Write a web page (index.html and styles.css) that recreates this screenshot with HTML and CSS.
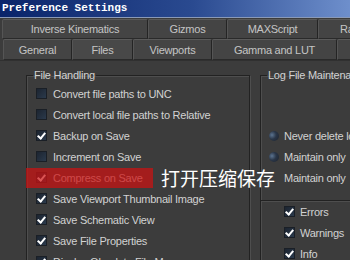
FILE: index.html
```
<!DOCTYPE html>
<html>
<head>
<meta charset="utf-8">
<link rel="stylesheet" href="styles.css">
</head>
<body>
<div class="window">
  <div class="titlebar">Preference Settings</div>
  <div class="tabs row1">
    <div class="tab w-ik">Inverse Kinematics</div>
    <div class="tab w-gz">Gizmos</div>
    <div class="tab w-ms">MAXScript</div>
    <div class="tab w-ra">Radiosity</div>
  </div>
  <div class="tabs row2">
    <div class="tab w-ge">General</div>
    <div class="tab w-fi active">Files</div>
    <div class="tab w-vp">Viewports</div>
    <div class="tab w-gl">Gamma and LUT</div>
    <div class="tab w-rn"></div>
  </div>
  <div class="content">
    <fieldset class="group files">
      <legend>File Handling</legend>
      <ul class="opts">
        <li><span class="cb"></span>Convert file paths to UNC</li>
        <li><span class="cb"></span>Convert local file paths to Relative</li>
        <li><span class="cb on"></span>Backup on Save</li>
        <li><span class="cb"></span>Increment on Save</li>
        <li><span class="cb on"></span>Compress on Save</li>
        <li><span class="cb on"></span>Save Viewport Thumbnail Image</li>
        <li><span class="cb on"></span>Save Schematic View</li>
        <li><span class="cb on"></span>Save File Properties</li>
        <li><span class="cb on"></span>Display Obsolete File Message</li>
      </ul>
    </fieldset>
    <fieldset class="group log">
      <legend>Log File Maintenance</legend>
      <div class="logtop">
        <ul class="opts radios">
          <li><span class="rb"></span>Never delete logs</li>
          <li><span class="rb"></span>Maintain only</li>
          <li><span class="rb none"></span>Maintain only</li>
        </ul>
      </div>
      <ul class="opts levels">
        <li><span class="cb on"></span>Errors</li>
        <li><span class="cb on"></span>Warnings</li>
        <li><span class="cb on"></span>Info</li>
      </ul>
    </fieldset>
  </div>
  <div class="highlight"></div>
  <div class="note">打开压缩保存</div>
</div>
</body>
</html>
```
FILE: styles.css
```
html, body {
  margin: 0;
  padding: 0;
  background: #3c3c3c;
  overflow: hidden;
}
.window {
  position: relative;
  width: 350px;
  height: 260px;
  overflow: hidden;
  background: #3c3c3c;
  font-family: "Liberation Sans", Arial, sans-serif;
  font-size: 11px;
  letter-spacing: -0.25px;
  color: #d2d2d2;
}
.titlebar {
  height: 17px;
  line-height: 17px;
  padding-left: 2px;
  background: linear-gradient(to right, #0a246a 0%, #2a4a90 55%, #6e8fcc 100%);
  border-bottom: 1px solid #8a9ab8;
  color: #ffffff;
  font-family: "Liberation Mono", "Courier New", monospace;
  font-weight: bold;
  font-size: 11px;
  letter-spacing: 0;
  white-space: nowrap;
}
.tabs {
  display: flex;
  white-space: nowrap;
}
.row1 {
  height: 20px;
  padding-left: 2px;
  margin-top: 1px;
}
.row2 {
  height: 21px;
  padding-left: 3px;
}
.tab {
  flex: none;
  box-sizing: border-box;
  background: #444444;
  border: 1px solid #2a2a2a;
  border-right-color: #242424;
  border-left-color: #555555;
  border-top-color: #5a5a5a;
  border-radius: 2px 2px 0 0;
  text-align: center;
  line-height: 19px;
  color: #c4c4c4;
  overflow: hidden;
}
.row2 .tab { line-height: 20px; }
.w-ik { width: 146px; }
.w-gz { width: 79px; }
.w-ms { width: 91px; }
.w-ra { width: 60px; text-align: left; padding-left: 21px; }
.w-ge { width: 69px; }
.w-fi { width: 61px; }
.w-vp { width: 79px; }
.w-gl { width: 125px; }
.w-rn { width: 40px; }
.tab.active { background: #484848; }
.content {
  display: flex;
  gap: 10px;
  padding: 7px 0 0 26px;
  border-top: 1px solid #303030;
}
.group {
  margin: 0;
  padding: 0;
  border: 1px solid #222222;
  box-shadow: inset 1px 1px 0 #4e4e4e, 1px 1px 0 #4e4e4e;
  min-width: 0;
  flex: none;
}
.group legend {
  padding: 0 1px;
  margin-left: 6px;
  line-height: 14px;
  color: #d2d2d2;
  white-space: nowrap;
}
.files { width: 222px; height: 200px; }
.log { width: 120px; height: 200px; }
.opts {
  list-style: none;
  margin: 0;
  padding: 1px 0 0 9px;
}
.opts li {
  display: flex;
  align-items: center;
  height: 21px;
  white-space: nowrap;
}
.cb {
  position: relative;
  flex: none;
  width: 11px;
  height: 11px;
  margin-right: 6px;
  box-sizing: border-box;
  background: linear-gradient(135deg, #1c2430 0%, #2b3a4c 100%);
  border: 1px solid #1a1f26;
}
.cb.on::after {
  content: "";
  position: absolute;
  left: 2px;
  top: 0px;
  width: 3px;
  height: 6px;
  border: solid #ffffff;
  border-width: 0 2px 2px 0;
  transform: rotate(40deg);
}
.logtop {
  padding-top: 42px;
  height: 76px;
  border-bottom: 1px solid #222222;
  box-shadow: 0 1px 0 #4e4e4e;
}
.radios { padding-left: 8px; }
.rb {
  flex: none;
  width: 10px;
  height: 10px;
  margin-right: 5px;
  border-radius: 50%;
  background: radial-gradient(circle at 30% 40%, #5c7490 0%, #2a3648 45%, #1c222c 100%);
}
.rb.none { visibility: hidden; }
.levels { padding-left: 23px; padding-top: 0; }
.levels .cb { margin-right: 5px; }
.highlight {
  position: absolute;
  left: 26px;
  top: 168px;
  width: 127px;
  height: 20px;
  background: rgba(205, 18, 18, 0.72);
}
.note {
  position: absolute;
  left: 161px;
  top: 165px;
  font-family: "Noto Sans CJK SC", sans-serif;
  font-size: 19px;
  line-height: 26px;
  letter-spacing: 0;
  color: #ffffff;
  white-space: nowrap;
}
```
